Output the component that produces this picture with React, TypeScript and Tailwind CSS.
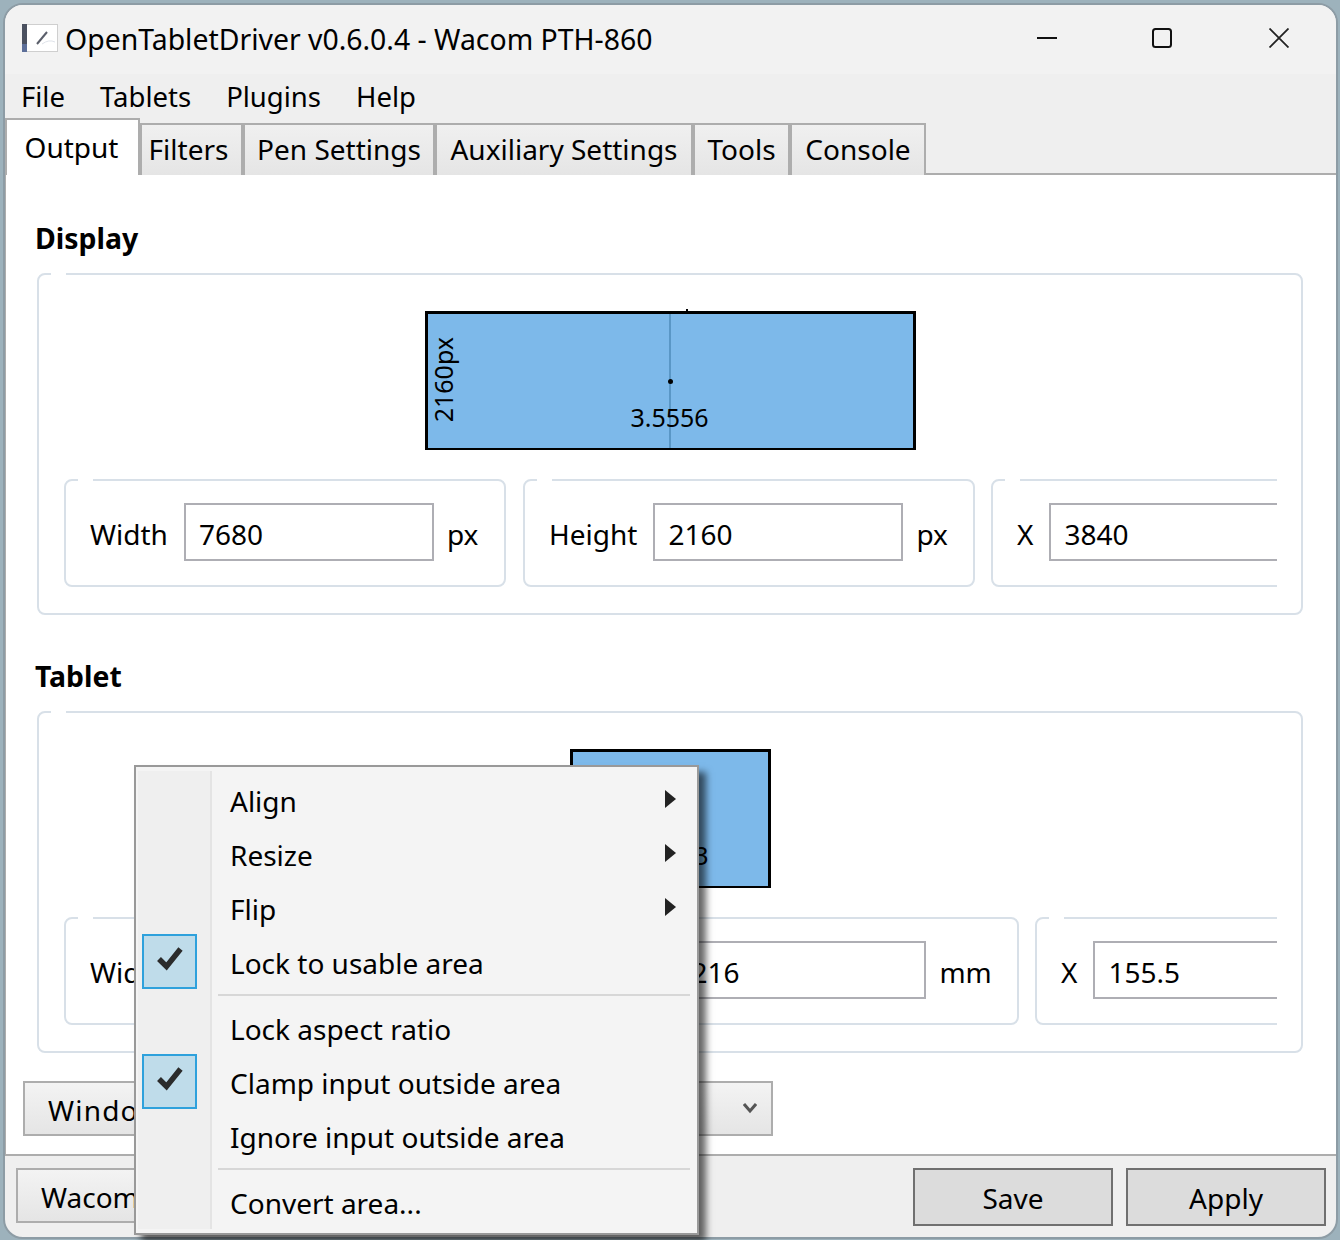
const font = { fontFamily: '"Noto Sans", "Open Sans", sans-serif' };

type FieldProps = {
  label: string;
  value: string;
  unit?: string;
  className: string;
};

// gap in the top border of a group box
function Notch() {
  return <div className="absolute left-[12px] top-[-2px] h-[2px] w-[15px] bg-white" />;
}

function Field({ label, value, unit, className }: FieldProps) {
  return (
    <div
      className={`relative flex h-[108px] shrink-0 items-center rounded-[8px] border-2 border-[#d8e0e8] pl-[24px] ${className}`}
    >
      <Notch />
      <span className="pt-[2px] text-[28px] leading-none text-black">{label}</span>
      <div className="mb-[2px] ml-[16px] flex h-[58px] w-[250px] shrink-0 items-center border-2 border-[#aeaeb4] pl-[13px] pt-[4px] text-[28px] leading-none">
        {value}
      </div>
      {unit && <span className="ml-[13px] pt-[2px] text-[28px] leading-none">{unit}</span>}
    </div>
  );
}

function Tab({ label, w }: { label: string; w: string }) {
  return (
    <div
      className={`flex h-[52px] items-center justify-center border-2 border-b-0 border-[#adadad] bg-gradient-to-b from-[#f0f0f0] to-[#e5e5e5] pb-[2px] text-[28px] leading-none ${w}`}
    >
      {label}
    </div>
  );
}

function Check() {
  return (
    <svg width="26" height="26" viewBox="0 0 26 26" className="mt-[-6px]">
      <path d="M2 13 L9.5 20.5 L23.5 3" fill="none" stroke="#2b2b2b" strokeWidth="5.5" />
    </svg>
  );
}

function MenuItem({
  label,
  arrow,
  checked,
}: {
  label: string;
  arrow?: boolean;
  checked?: boolean;
}) {
  return (
    <div className="relative flex h-[54px] items-center">
      <div className="flex h-full w-[76px] shrink-0 items-center pl-[6px]">
        {checked && (
          <div className="mt-[-1px] flex h-[55px] w-[55px] shrink-0 items-center justify-center border-2 border-[#2ea1dc] bg-[#bfdcea]">
            <Check />
          </div>
        )}
      </div>
      <span className="ml-[18px] pt-[2px] text-[28px] leading-none">{label}</span>
      {arrow && (
        <svg width="11" height="18" viewBox="0 0 11 18" className="absolute left-[529px] top-[17px]">
          <path d="M0 0 L11 9 L0 18 Z" fill="#222" />
        </svg>
      )}
    </div>
  );
}

function MenuSeparator() {
  return (
    <div className="flex h-[12px] items-center pl-[82px] pr-[7px]">
      <div className="h-[2px] w-full bg-[#d7d7d7]" />
    </div>
  );
}

export default function App() {
  return (
    <div
      className="relative h-[1240px] w-[1340px] overflow-hidden bg-[#9db2bc] pl-[3px] pt-[3px] text-black"
      style={font}
    >
      <div className="flex h-[1236px] w-[1335px] flex-col overflow-hidden rounded-[20px] border-2 border-[#8d9ca5] bg-[#efefef]">
        {/* title bar */}
        <div className="flex h-[69px] shrink-0 items-center bg-[#f2f2f2] pl-[17px]">
          <svg width="36" height="28" viewBox="0 0 36 28" className="mt-[-3px] shrink-0">
            <rect x="0.5" y="0.5" width="35" height="27" fill="#fff" stroke="#cfcfcf" strokeWidth="1" />
            <rect x="0" y="0" width="5" height="28" fill="#4b5160" />
            <rect x="0" y="20" width="5" height="8" fill="#5d6f99" />
            <path d="M15 20 L25 8" stroke="#5b5f6b" strokeWidth="2" />
            <path d="M20 20 Q27 15 33 18" stroke="#dfe3ea" strokeWidth="1" fill="none" />
          </svg>
          <span className="ml-[7px] text-[28.4px] leading-none">OpenTabletDriver v0.6.0.4 - Wacom PTH-860</span>
          <div className="ml-auto flex h-full items-center">
            <svg width="20" height="20" viewBox="0 0 20 20" className="mr-[95px] mt-[-3px]">
              <path d="M0 10 H20" stroke="#111" strokeWidth="2" />
            </svg>
            <svg width="20" height="20" viewBox="0 0 20 20" className="mr-[97px] mt-[-3px]">
              <rect x="1" y="1" width="18" height="18" rx="2.5" fill="none" stroke="#111" strokeWidth="2" />
            </svg>
            <svg width="20" height="20" viewBox="0 0 20 20" className="mr-[47px] mt-[-3px]">
              <path d="M0.5 0.5 L19.5 19.5 M19.5 0.5 L0.5 19.5" stroke="#222" strokeWidth="1.8" />
            </svg>
          </div>
        </div>

        {/* menu bar */}
        <div className="flex h-[44px] shrink-0 items-center gap-[35px] pl-[16px] pt-[2px] text-[27.5px] leading-none">
          <span>File</span>
          <span>Tablets</span>
          <span>Plugins</span>
          <span>Help</span>
        </div>

        {/* tabs */}
        <div className="relative z-10 mb-[-2px] flex h-[57px] shrink-0 items-end">
          <div className="flex h-[57px] w-[135px] items-start justify-center border-2 border-b-0 border-[#adadad] bg-white pr-[2px] pt-[13px] text-[28px] leading-none">
            Output
          </div>
          <Tab label="Filters" w="w-[103px] pr-[6px]" />
          <Tab label="Pen Settings" w="w-[192px]" />
          <Tab label="Auxiliary Settings" w="w-[258px]" />
          <Tab label="Tools" w="w-[97px]" />
          <Tab label="Console" w="w-[136px]" />
        </div>

        {/* main content */}
        <div className="flex h-[981px] shrink-0 flex-col border-l border-t-2 border-[#adadad] bg-white pl-[31px] pt-[49px]">
          <div className="ml-[-2px] h-[32px] text-[28.4px] font-bold leading-none">Display</div>
          <div className="relative mt-[17px] h-[342px] w-[1266px] rounded-[8px] border-2 border-[#d8e0e8] pl-[25px]">
            <Notch />
            <div className="relative ml-[361px] mt-[36px] h-[139px] w-[491px] border-[3px] border-b-2 border-black bg-[#7db9ea]">
              <div className="absolute left-[241px] top-0 h-full w-[2px] bg-[#5a97c6]" />
              <div className="absolute left-[258px] top-[-5px] h-[5px] w-[2px] bg-black" />
              <div className="absolute left-[239.5px] top-[65px] h-[5px] w-[5px] rounded-full bg-black" />
              <div className="absolute bottom-[18px] left-[-1px] w-full text-center text-[25px] leading-none">3.5556</div>
              <div className="absolute left-[3px] top-[23px] rotate-180 text-[25px] leading-none [writing-mode:vertical-rl]">
                2160px
              </div>
            </div>
            <div className="mt-[29px] flex w-[1213px] gap-[17px] overflow-hidden">
              <Field label="Width" value="7680" unit="px" className="w-[442px]" />
              <Field label="Height" value="2160" unit="px" className="w-[452px]" />
              <Field label="X" value="3840" className="ml-[-1px] w-[400px]" />
            </div>
          </div>

          <div className="ml-[-2px] mt-[47px] h-[32px] text-[28.4px] font-bold leading-none">Tablet</div>
          <div className="relative mt-[17px] h-[342px] w-[1266px] rounded-[8px] border-2 border-[#d8e0e8] pl-[25px]">
            <Notch />
            <div className="relative ml-[506px] mt-[36px] h-[139px] w-[201px] border-[3px] border-b-2 border-black bg-[#7db9ea]">
              <div className="absolute bottom-[18px] left-[-1px] w-full text-center text-[25px] leading-none">1.4463</div>
            </div>
            <div className="mt-[29px] flex w-[1213px] gap-[17px] overflow-hidden">
              <Field label="Width" value="216" unit="mm" className="w-[465px]" />
              <Field label="Height" value="216" unit="mm" className="w-[473px]" />
              <Field label="X" value="155.5" className="ml-[-1px] w-[400px]" />
            </div>
          </div>

          <div className="ml-[-14px] mt-[28px] flex h-[55px] w-[750px] items-center border-2 border-[#adadad] bg-gradient-to-b from-[#f3f3f3] to-[#e5e5e5] pl-[23px] pr-[14px] pt-[2px] text-[28px] leading-none">
            <span className="tracking-[1.2px]">Windows Ink</span>
            <svg width="14" height="11" viewBox="0 0 14 11" className="ml-auto mt-[-2px]">
              <path d="M1 1 L7 8 L13 1" fill="none" stroke="#555" strokeWidth="3" />
            </svg>
          </div>
        </div>

        {/* footer */}
        <div className="flex h-[83px] shrink-0 items-start border-t-2 border-[#adadad] pl-[11px] pr-[10px] pt-[12px]">
          <div className="flex h-[55px] w-[400px] items-center border-2 border-[#adadad] bg-gradient-to-b from-[#f3f3f3] to-[#e5e5e5] pl-[23px] pt-[2px] text-[28px] leading-none">
            Wacom PTH-860
          </div>
          <button className="ml-auto flex h-[58px] w-[200px] items-center justify-center border-2 border-[#707070] bg-[#dcdcdc] pt-[2px] text-[28px] leading-none">
            Save
          </button>
          <button className="ml-[13px] flex h-[58px] w-[200px] items-center justify-center border-2 border-[#707070] bg-[#dcdcdc] pt-[2px] text-[28px] leading-none">
            Apply
          </button>
        </div>
      </div>

      {/* context menu */}
      <div className="absolute left-[134px] top-[765px] z-20 h-[470px] w-[565px] border-2 border-[#999999] bg-[#f4f4f4] pt-[6px] shadow-[7px_7px_7px_rgba(0,0,0,0.6)]">
        <div className="absolute bottom-[4px] left-[2px] top-[4px] w-[74px] border-r-2 border-[#e4e4e4] bg-[#efefef]" />
        <div className="relative">
          <MenuItem label="Align" arrow />
          <MenuItem label="Resize" arrow />
          <MenuItem label="Flip" arrow />
          <MenuItem label="Lock to usable area" checked />
          <MenuSeparator />
          <MenuItem label="Lock aspect ratio" />
          <MenuItem label="Clamp input outside area" checked />
          <MenuItem label="Ignore input outside area" />
          <MenuSeparator />
          <MenuItem label="Convert area..." />
        </div>
      </div>
    </div>
  );
}
